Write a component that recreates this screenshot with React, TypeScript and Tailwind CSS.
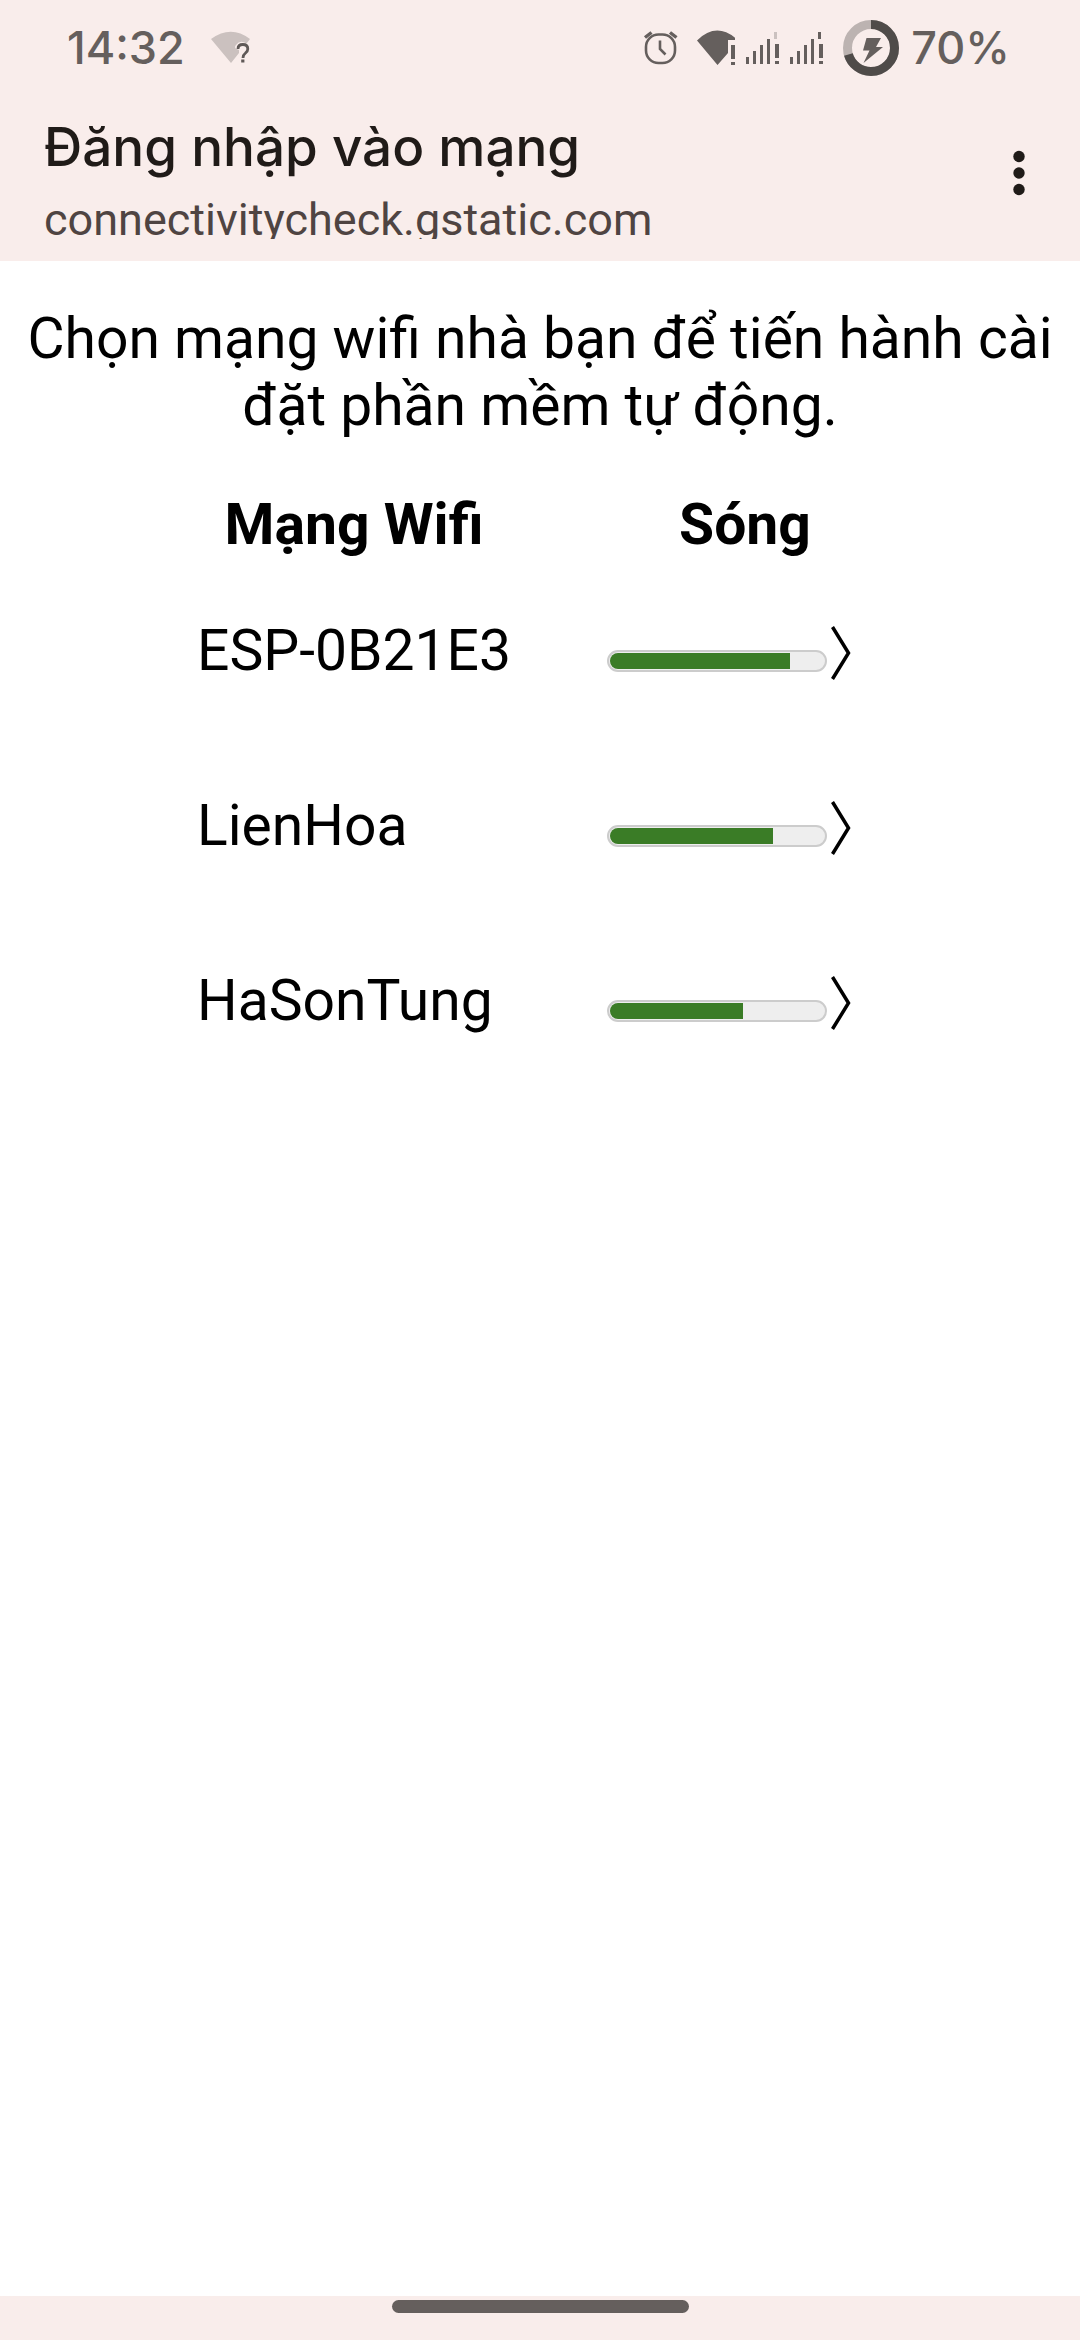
const networks = [
  { name: 'ESP-0B21E3', signal: 84 },
  { name: 'LienHoa', signal: 76 },
  { name: 'HaSonTung', signal: 62 },
];

function WifiUnknownIcon() {
  return (
    <svg viewBox="0 0 40 36" className="h-9 w-10" aria-label="Wifi ?">
      <path d="M0 9 Q20 -5.500 39 9 L35.500 13.500 Q29 9.500 25 15 Q22 18.500 28 20 L28 23 L20 33 Z" fill="#cbc1bf" />
      <path
        d="M27 19 Q27 14.500 31.800 14.500 Q36.800 14.500 36.800 19 Q36.800 21 34.500 23 Q32 25 32 28"
        fill="none"
        stroke="#5f5957"
        strokeWidth="2.800"
      />
      <rect x="30.200" y="29.500" width="3.200" height="3" fill="#5f5957" />
    </svg>
  );
}

function AlarmIcon() {
  return (
    <svg viewBox="0 0 36 36" className="size-9" fill="none" stroke="#655f5d" aria-label="Alarm">
      <rect x="3" y="4.500" width="29" height="28.500" rx="12.500" strokeWidth="2.600" />
      <path d="M2 7.500 L8.500 2.500 M33.500 7.500 L27 2.500" strokeWidth="3.400" />
      <path d="M17 10.500 V19 L22.500 24.500" strokeWidth="2.600" />
    </svg>
  );
}

function WifiAlertIcon() {
  return (
    <svg viewBox="0 0 40 38" className="h-[38px] w-10" fill="#655f5d" aria-label="Wifi">
      <path d="M2 11.500 Q22 -8 42.500 11 H33 V24 L22.500 36 Z" />
      <rect x="36" y="16" width="4" height="14" />
      <rect x="36" y="33" width="4" height="3" />
    </svg>
  );
}

function SignalIcon({ tip }: { tip: string }) {
  return (
    <svg viewBox="0 0 34 38" className="h-[38px] w-[34px]" fill="#655f5d" aria-label="Signal">
      <rect x="1" y="28" width="3" height="7" />
      <rect x="8" y="22" width="3" height="13" />
      <rect x="15" y="16" width="3" height="19" />
      <rect x="22" y="10" width="3" height="25" />
      <rect x="29" y="3" width="3" height="7" fill={tip} />
      <rect x="30" y="15" width="4" height="14" />
      <rect x="30" y="32" width="4" height="3" />
    </svg>
  );
}

function BatteryIcon() {
  return (
    <svg viewBox="0 0 56 56" className="size-14" aria-label="Battery">
      <circle cx="28" cy="28" r="23.500" fill="none" stroke="#bcb3b1" strokeWidth="9" />
      <circle
        cx="28"
        cy="28"
        r="23.500"
        fill="none"
        stroke="#4f4b49"
        strokeWidth="9"
        pathLength="100"
        strokeDasharray="70.500 100"
        transform="rotate(-90 28 28)"
      />
      <path d="M23.500 18 H38 L33 27 H40 L20.500 43 L26.500 30.500 H20 Z" fill="#655f5d" />
    </svg>
  );
}

export default function App() {
  return (
    <div className="flex min-h-screen flex-col bg-white font-['Roboto',sans-serif] text-black">
      <div className="flex h-24 items-center bg-[#f9edeb] pr-[70px] pl-[67px] font-['Inter',sans-serif] text-[45px] font-medium text-[#655f5d]">
        <time>14:32</time>
        <div className="ml-[26px]">
          <WifiUnknownIcon />
        </div>
        <div className="ml-auto flex items-center">
          <AlarmIcon />
          <div className="ml-4 flex items-center gap-[10px]">
            <WifiAlertIcon />
            <SignalIcon tip="#cbc1bf" />
            <SignalIcon tip="#655f5d" />
          </div>
          <div className="ml-5 flex items-center gap-3">
            <BatteryIcon />
            <span>70%</span>
          </div>
        </div>
      </div>

      <header className="flex items-start justify-between bg-[#f9edeb] pt-[21px] pr-10 pb-[22px] pl-11">
        <div>
          <h1 className="font-['Inter',sans-serif] text-[53px] leading-[60px] font-medium text-[#201b18]">
            Đăng nhập vào mạng
          </h1>
          <p className="mt-6 overflow-hidden text-[45px] leading-[38px] text-[#4f4442]">
            connectivitycheck.gstatic.com
          </p>
        </div>
        <button type="button" aria-label="Menu" className="mt-8 flex w-[42px] justify-center">
          <svg viewBox="0 0 12 48" className="h-12 w-3" fill="#201b18">
            <circle cx="6" cy="7.500" r="5.700" />
            <circle cx="6" cy="24" r="5.700" />
            <circle cx="6" cy="40.500" r="5.700" />
          </svg>
        </button>
      </header>

      <main className="flex-1 px-6 pt-11 text-[57px] leading-[67px]">
        <p className="text-center">Chọn mạng wifi nhà bạn để tiến hành cài đặt phần mềm tự động.</p>
        <table className="mx-auto mt-[52px]">
          <thead>
            <tr className="h-[72px] align-top">
              <th scope="col" className="p-0 font-bold">Mạng Wifi</th>
              <th scope="col" className="w-[372px] p-0 pl-24 font-bold">Sóng</th>
            </tr>
          </thead>
          <tbody>
            {networks.map((network) => (
              <tr key={network.name} className="h-[175px]">
                <td className="p-0">{network.name}</td>
                <td className="p-0 pl-24">
                  <a href={`#${network.name}`} aria-label={network.name} className="flex items-center gap-1">
                    <progress
                      value={network.signal}
                      max={100}
                      aria-label={`Sóng ${network.name}`}
                      className="mt-5 h-[22px] w-[220px] appearance-none overflow-hidden rounded-[11px] border-2 border-[#cccccc] bg-[#eeeeee] p-px [&::-webkit-progress-bar]:overflow-hidden [&::-webkit-progress-bar]:rounded-[8px] [&::-webkit-progress-bar]:bg-[#eeeeee] [&::-webkit-progress-value]:bg-[#3a7c26]"
                    />
                    <svg viewBox="0 0 20 56" className="mt-1 h-14 w-5" fill="none" stroke="black" strokeWidth="3.500">
                      <path d="M1.500 2 L17.500 28 L1.500 54" />
                    </svg>
                  </a>
                </td>
              </tr>
            ))}
          </tbody>
        </table>
      </main>

      <footer className="flex h-11 justify-center bg-[#f9edeb] pt-1">
        <div className="h-[13px] w-[297px] rounded-full bg-[#655f5d]" />
      </footer>
    </div>
  );
}
